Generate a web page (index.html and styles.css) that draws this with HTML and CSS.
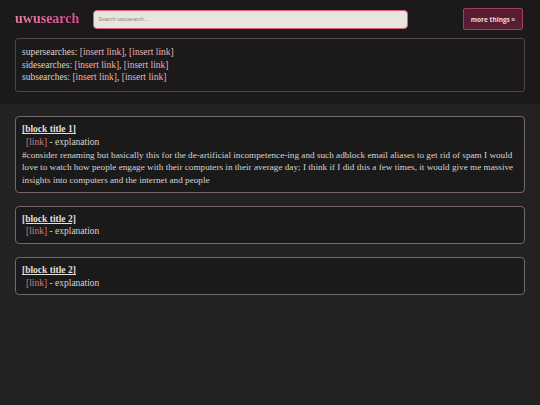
FILE: index.html
```html
<!DOCTYPE html>
<html lang="en">
<head>
    <meta charset="UTF-8">
    <meta name="viewport" content="width=device-width, initial-scale=1.0">
    <title>uwusearch</title>
    <link rel="stylesheet" href="styles.css">
</head>
<body>
    <header class="top">
        <div class="top-row">
            <span class="logo">uwusearch</span>
            <input type="text" class="search" placeholder="Search uwusearch...">
            <button class="more">more things &#8801;</button>
        </div>
        <div class="related">
            <div>supersearches: <a href="#">[insert link]</a>, <a href="#">[insert link]</a></div>
            <div>sidesearches: <a href="#">[insert link]</a>, <a href="#">[insert link]</a></div>
            <div>subsearches: <a href="#">[insert link]</a>, <a href="#">[insert link]</a></div>
        </div>
    </header>

    <main class="blocks">
        <div class="block">
            <div class="block-title">[block title 1]</div>
            <div class="entry"><a href="#">[link]</a> - explanation</div>
            <div class="note">#consider renaming but basically this for the de-artificial incompetence-ing and such adblock email aliases to get rid of spam I would love to watch how people engage with their computers in their average day; I think if I did this a few times, it would give me massive insights into computers and the internet and people</div>
        </div>
        <div class="block">
            <div class="block-title">[block title 2]</div>
            <div class="entry"><a href="#">[link]</a> - explanation</div>
        </div>
        <div class="block">
            <div class="block-title">[block title 2]</div>
            <div class="entry"><a href="#">[link]</a> - explanation</div>
        </div>
    </main>
</body>
</html>
```

FILE: styles.css
```css
/* base */
body {
    margin: 0;
    background-color: #222222;
    color: #d9d3cc;
    font-family: "Liberation Serif", "DejaVu Serif", serif;
    font-size: 9.5px;
    line-height: 12.7px;
    min-height: 100vh;
}

a {
    text-decoration: none;
}

/* header */
.top {
    background-color: #1b191a;
    padding: 8px 15px 12px;
}

.top-row {
    display: flex;
    align-items: center;
    height: 22px;
}

.logo {
    font-size: 14px;
    font-weight: bold;
    color: #e2609c;
    background: linear-gradient(90deg, #e47fa8, #e0468a);
    -webkit-background-clip: text;
    background-clip: text;
    -webkit-text-fill-color: transparent;
    margin-right: 14px;
    margin-top: 1px;
}

.search {
    width: 315px;
    height: 19px;
    box-sizing: border-box;
    padding: 0 4px;
    border: 1px solid #d9607e;
    border-radius: 4px;
    background-color: #e8e5de;
    font-family: "Liberation Sans", sans-serif;
    font-size: 5.5px;
    outline: none;
}

.search::placeholder {
    color: #8a8784;
}

.more {
    margin-left: auto;
    margin-right: 2px;
    height: 22px;
    width: 60px;
    padding: 0;
    border: 1px solid #a43d62;
    border-radius: 2px;
    background-color: #561d33;
    color: #eadbe0;
    font-family: "Open Sans", "Liberation Sans", sans-serif;
    font-weight: bold;
    font-size: 6.5px;
    cursor: pointer;
}

.related {
    margin-top: 8px;
    border: 1px solid #4d4548;
    border-radius: 3px;
    padding: 7px 6px 7px;
}

.related a {
    color: #e6b3bd;
}

/* blocks */
.blocks {
    padding: 12px 15px;
    display: flex;
    flex-direction: column;
    gap: 13px;
}

.block {
    background-color: #1b1a1b;
    border: 1px solid #75666b;
    border-radius: 4px;
    padding: 6px 6px 5px;
}

.block-title {
    font-weight: bold;
    text-decoration: underline;
    color: #e4dfda;
}

.entry {
    padding-left: 4px;
}

.entry a {
    color: #c2828f;
}

.note {
    font-size: 9.2px;
}
```
